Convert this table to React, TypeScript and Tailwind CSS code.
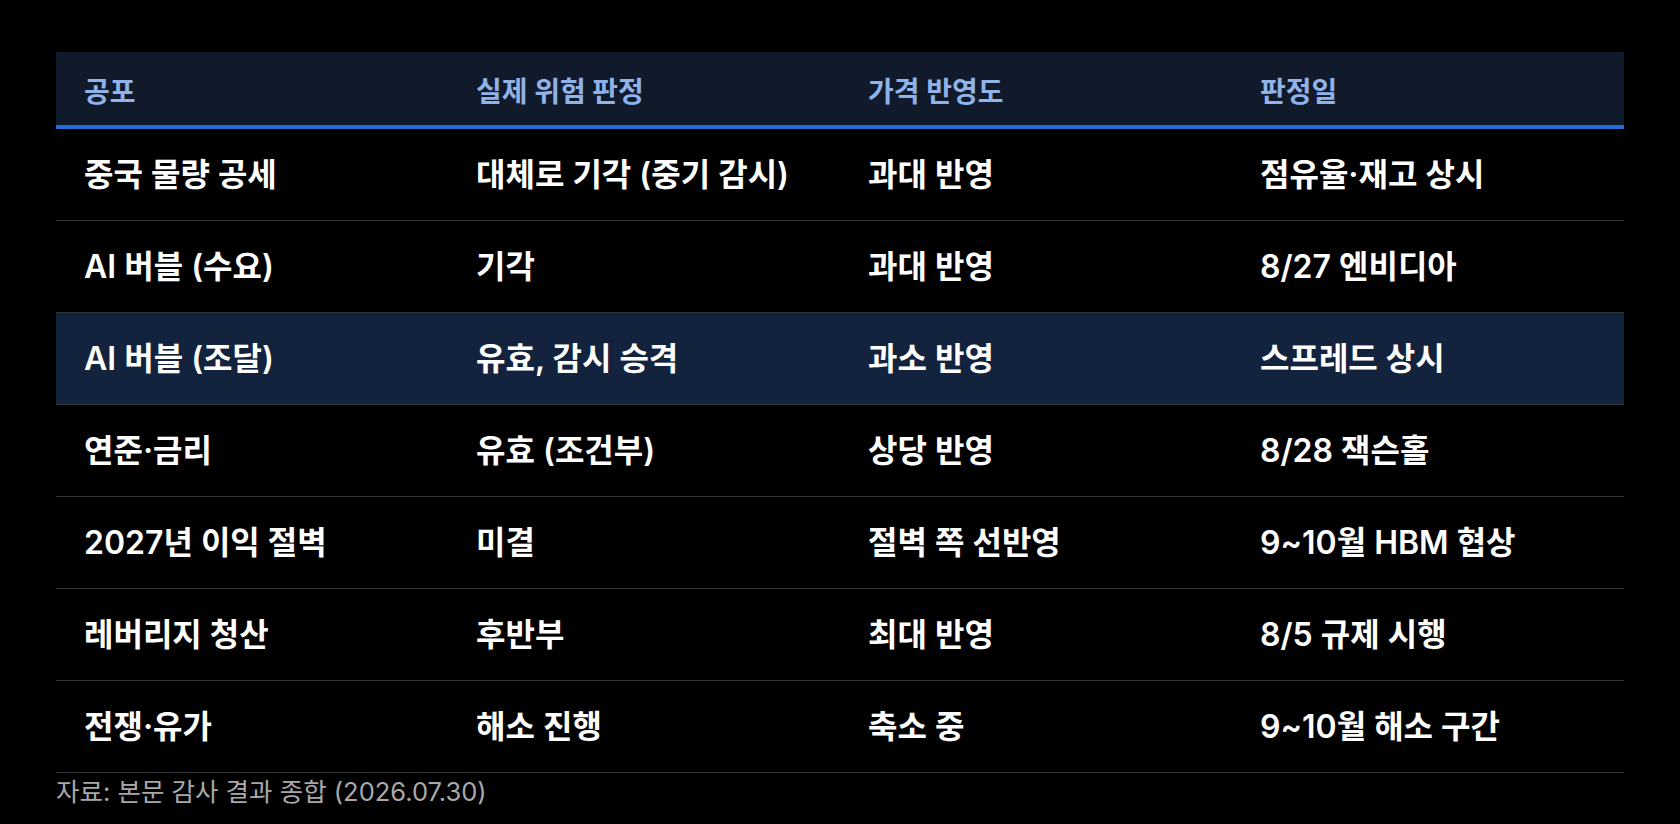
const rows = [
  { fear: '중국 물량 공세', risk: '대체로 기각 (중기 감시)', priced: '과대 반영', date: '점유율·재고 상시' },
  { fear: 'AI 버블 (수요)', risk: '기각', priced: '과대 반영', date: '8/27 엔비디아' },
  { fear: 'AI 버블 (조달)', risk: '유효, 감시 승격', priced: '과소 반영', date: '스프레드 상시', highlight: true },
  { fear: '연준·금리', risk: '유효 (조건부)', priced: '상당 반영', date: '8/28 잭슨홀' },
  { fear: '2027년 이익 절벽', risk: '미결', priced: '절벽 쪽 선반영', date: '9~10월 HBM 협상' },
  { fear: '레버리지 청산', risk: '후반부', priced: '최대 반영', date: '8/5 규제 시행' },
  { fear: '전쟁·유가', risk: '해소 진행', priced: '축소 중', date: '9~10월 해소 구간' },
];

const headers = ['공포', '실제 위험 판정', '가격 반영도', '판정일'];

export default function App() {
  return (
    <div
      className="min-h-screen bg-black px-14 pt-[52px] text-white"
      style={{ fontFamily: '"Inter", "Noto Sans CJK KR", sans-serif' }}
    >
      <div className="w-full">
        <div className="grid h-[77px] grid-cols-4 items-center border-b-4 border-[#1f6ddb] bg-[#111a2b] pt-[7px]">
          {headers.map(h => (
            <div key={h} className="pl-7 text-[28px] font-bold text-[#8fb3e8]">
              {h}
            </div>
          ))}
        </div>

        {rows.map(row => (
          <div
            key={row.fear}
            className={`grid h-[92px] grid-cols-4 items-center border-b border-[#333333] ${
              row.highlight ? 'bg-[#14233d]' : 'bg-black'
            }`}
          >
            <div className="pl-7 text-[32px] font-semibold">{row.fear}</div>
            <div className="pl-7 text-[32px] font-semibold">{row.risk}</div>
            <div className="pl-7 text-[32px] font-semibold">{row.priced}</div>
            <div className="pl-7 text-[32px] font-semibold">{row.date}</div>
          </div>
        ))}
      </div>

      <p className="mt-[3px] text-[25.5px] leading-[32px] text-[#a9a9a9]">
        자료: 본문 감사 결과 종합 (2026.07.30)
      </p>
    </div>
  );
}
